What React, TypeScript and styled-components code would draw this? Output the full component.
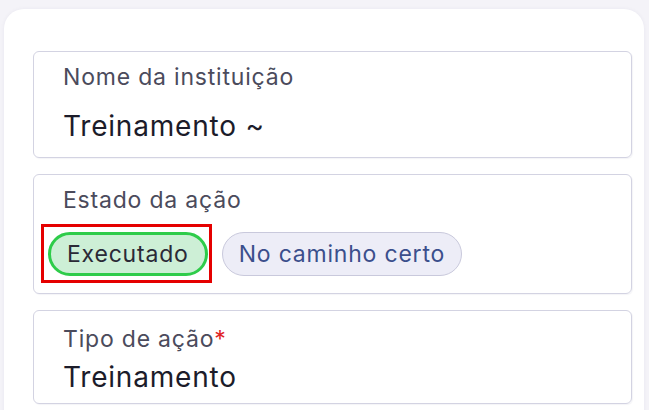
import styled, { createGlobalStyle, css } from "styled-components";

const GlobalStyle = createGlobalStyle`
  html, body {
    margin: 0;
    padding: 0;
    background: #f4f3f8;
    font-family: Inter, "Noto Sans", sans-serif;
  }
`;

const Page = styled.div`
  padding: 9px 5px 0 4px;
  height: 410px;
  box-sizing: border-box;
  overflow: hidden;
`;

const Card = styled.div`
  width: 640px;
  min-height: 420px;
  box-sizing: border-box;
  background: #ffffff;
  border-radius: 20px;
  box-shadow: 0 0 4px rgba(40, 40, 90, 0.05);
  padding: 42px 12px 0 29px;
  display: flex;
  flex-direction: column;
  gap: 16px;
`;

const Field = styled.div<{ $variant?: "input" | "chips" | "plain" }>`
  border: 1px solid #d3d3e2;
  border-radius: 6px;
  box-shadow: 1px 1px 1px rgba(60, 60, 120, 0.06);
  display: flex;
  flex-direction: column;
  padding: 0 29px;
  box-sizing: border-box;
  ${({ $variant }) =>
    $variant === "input"
      ? css`
          height: 107px;
          padding-top: 11px;
          gap: 17px;
        `
      : $variant === "chips"
      ? css`
          height: 120px;
          padding-top: 11px;
          gap: 18px;
        `
      : css`
          height: 94px;
          padding-top: 14px;
          gap: 6px;
        `}
`;

const Label = styled.div`
  font-size: 23px;
  letter-spacing: 0.8px;
  color: #4b4b5c;
  line-height: 28px;
`;

const Required = styled.span`
  color: #e02424;
`;

const Value = styled.div`
  font-size: 28px;
  letter-spacing: 0.8px;
  color: #1c1c2a;
  line-height: 36px;
`;

const ChipRow = styled.div`
  display: flex;
  gap: 14px;
  margin-left: -15px;
`;

const Chip = styled.span<{ $active?: boolean; $marked?: boolean }>`
  position: relative;
  display: inline-flex;
  align-items: center;
  height: 44px;
  box-sizing: border-box;
  padding: 0 16px;
  border-radius: 22px;
  font-size: 23px;
  letter-spacing: 0.8px;
  ${({ $active }) =>
    $active
      ? css`
          background: #cdefd6;
          border: 3px solid #2ecc4a;
          color: #2a2a36;
        `
      : css`
          background: #ededf7;
          border: 1.5px solid #c9c9dc;
          color: #3b4f8c;
        `}
  ${({ $marked }) =>
    $marked &&
    css`
      &::after {
        content: "";
        position: absolute;
        top: -11px;
        bottom: -10px;
        left: -10px;
        right: -7px;
        border: 3px solid #e50000;
        pointer-events: none;
      }
    `}
`;

export default function App() {
  return (
    <>
      <GlobalStyle />
      <Page>
        <Card>
          <Field $variant="input">
            <Label>Nome da instituição</Label>
            <Value>Treinamento ~</Value>
          </Field>
          <Field $variant="chips">
            <Label>Estado da ação</Label>
            <ChipRow>
              <Chip $active $marked>
                Executado
              </Chip>
              <Chip>No caminho certo</Chip>
            </ChipRow>
          </Field>
          <Field>
            <Label>
              Tipo de ação<Required>*</Required>
            </Label>
            <Value>Treinamento</Value>
          </Field>
        </Card>
      </Page>
    </>
  );
}
